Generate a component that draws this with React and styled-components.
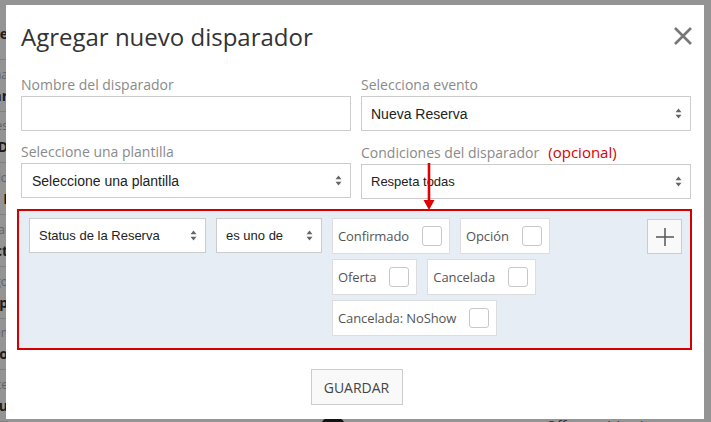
import React from 'react';
import styled, { createGlobalStyle } from 'styled-components';

const GlobalStyle = createGlobalStyle`
  html, body { margin: 0; padding: 0; }
  body { font-family: "Open Sans", "Liberation Sans", sans-serif; overflow: hidden; }
`;

const Screen = styled.div`
  position: relative;
  width: 711px;
  height: 422px;
  overflow: hidden;
  background: #fff;
  display: flex;
`;

const BackList = styled.div`
  display: flex;
  flex-direction: column;
  flex: 0 0 120px;
  margin-left: -112px;
  padding-top: 8px;
`;

const BackItem = styled.div`
  height: 55px;
  border-bottom: 1px solid #ddd;
  display: flex;
  flex-direction: column;
  align-items: flex-end;
  justify-content: center;
  gap: 3px;
`;

const BackLabel = styled.span`
  font-size: 12px;
  color: #aaa;
`;

const BackValue = styled.span`
  font-size: 14px;
  font-weight: 700;
  color: #333;
`;

const BackMain = styled.div`
  flex: 1;
  display: flex;
  flex-direction: column;
  justify-content: flex-end;
`;

const BackFooter = styled.div`
  display: flex;
  align-items: flex-start;
  gap: 200px;
  padding-left: 312px;
  margin-bottom: -18px;
  height: 24px;
`;

const Avatar = styled.span`
  width: 26px;
  height: 26px;
  border-radius: 50%;
  background: #222;
`;

const BackNote = styled.span`
  font-size: 14px;
  color: #555;
  margin-top: 0;
`;

const Overlay = styled.div`
  position: absolute;
  inset: 0;
  background: rgba(0, 0, 0, 0.42);
`;

const Modal = styled.div`
  position: absolute;
  left: 6px;
  top: 5px;
  width: 698px;
  box-sizing: border-box;
  padding: 17px 13px 14px 15px;
  background: #fff;
  display: flex;
  flex-direction: column;
`;

const Header = styled.div`
  display: flex;
  align-items: flex-start;
  justify-content: space-between;
`;

const Title = styled.h1`
  margin: 0;
  font-size: 24px;
  line-height: 30px;
  font-weight: 400;
  color: #333;
`;

const Close = styled.button`
  border: 0;
  background: none;
  padding: 0;
  margin: 5px -1px 0 0;
  width: 18px;
  height: 18px;
  cursor: pointer;
  display: flex;
`;

const FieldRow = styled.div`
  display: grid;
  grid-template-columns: 330px 330px;
  column-gap: 10px;
  margin-top: ${p => p.$top}px;
`;

const Field = styled.div`
  position: relative;
  display: flex;
  flex-direction: column;
  gap: 1px;
`;

const Label = styled.label`
  font-size: 14px;
  line-height: 20px;
  color: #8a8a8a;
`;

const Optional = styled.span`
  color: #d90000;
  font-size: 15px;
  margin-left: 9px;
`;

const Input = styled.input`
  box-sizing: border-box;
  height: 35px;
  border: 1px solid #ccc;
  border-radius: 0;
  outline: none;
  padding: 0 9px;
  font-size: 14px;
`;

const Select = styled.div`
  box-sizing: border-box;
  height: 35px;
  width: ${p => (p.$w ? `${p.$w}px` : 'auto')};
  border: 1px solid #ccc;
  background: #fff;
  display: flex;
  align-items: center;
  justify-content: space-between;
  padding: 0 8px 0 ${p => p.$pl || 9}px;
  font-family: "Liberation Sans", Arial, sans-serif;
  font-size: ${p => p.$fs || 14}px;
  color: #222;
  flex-shrink: 0;
`;

const Arrow = styled.svg`
  position: absolute;
  left: 62px;
  top: 21px;
  overflow: visible;
`;

const Conditions = styled.div`
  margin: 10px -1px 0 -4px;
  border: 2px solid #d40000;
  background: #e7edf4;
  padding: 7px 8px 12px 10px;
  display: flex;
  align-items: flex-start;
  gap: 10px;
`;

const Chips = styled.div`
  flex: 0 0 300px;
  display: flex;
  flex-wrap: wrap;
  gap: 5px 10px;
`;

const Chip = styled.div`
  box-sizing: border-box;
  height: 36px;
  display: flex;
  align-items: center;
  padding: 0 7px 0 5px;
  background: #fff;
  border: 1px solid #ddd;
  font-size: 13px;
  letter-spacing: -0.1px;
  color: #555;
`;

const Box = styled.span`
  width: 20px;
  height: 20px;
  box-sizing: border-box;
  border: 1px solid #c8c8c8;
  border-radius: 3px;
  background: #fff;
  margin-left: 13px;
`;

const PlusButton = styled.button`
  margin-left: auto;
  margin-top: 1px;
  width: 35px;
  height: 35px;
  box-sizing: border-box;
  border: 1px solid #ccc;
  background: #f9f9f9;
  display: flex;
  align-items: center;
  justify-content: center;
  padding: 0;
`;

const Footer = styled.div`
  display: flex;
  justify-content: center;
  margin-top: 19px;
`;

const SaveButton = styled.button`
  width: 92px;
  height: 36px;
  border: 1px solid #ccc;
  background: #f9f9f9;
  font-family: "Open Sans", sans-serif;
  font-size: 14px;
  color: #444;
  padding: 0;
  margin-left: 1px;
`;

function Caret() {
  return (
    <svg width="7" height="11" viewBox="0 0 7 11">
      <path d="M3.5 0.5 L6.5 4.2 H0.5 Z M3.5 10.5 L6.5 6.8 H0.5 Z" fill="#666" />
    </svg>
  );
}

function Dropdown({ children, ...rest }) {
  return (
    <Select {...rest}>
      <span>{children}</span>
      <Caret />
    </Select>
  );
}

const backItems = [
  ['Fecha', 'Mar'],
  ['Noches', 'HD'],
  ['Estado', 'Confirmado I'],
  ['Canal', 'Booking Direct'],
  ['Pago', 'Transf tp'],
  ['Origen', 'Recepción o'],
  ['Agente', 'Maru'],
];

const statuses = ['Confirmado', 'Opción', 'Oferta', 'Cancelada', 'Cancelada: NoShow'];

export default function App() {
  return (
    <Screen>
      <GlobalStyle />
      <BackList>
        <BackItem><BackValue>Tie</BackValue></BackItem>
        {backItems.map(([l, v]) => (
          <BackItem key={l}>
            <BackLabel>{l}</BackLabel>
            <BackValue>{v}</BackValue>
          </BackItem>
        ))}
      </BackList>
      <BackMain>
        <BackFooter>
          <Avatar />
          <BackNote>Offer expiring in</BackNote>
        </BackFooter>
      </BackMain>
      <Overlay />
      <Modal>
        <Header>
          <Title>Agregar nuevo disparador</Title>
          <Close aria-label="Cerrar">
            <svg width="18" height="18" viewBox="0 0 18 18">
              <path d="M1 1 L17 17 M17 1 L1 17" stroke="#777" strokeWidth="2.6" />
            </svg>
          </Close>
        </Header>

        <FieldRow $top={23}>
          <Field>
            <Label>Nombre del disparador</Label>
            <Input />
          </Field>
          <Field>
            <Label>Selecciona evento</Label>
            <Dropdown>Nueva Reserva</Dropdown>
          </Field>
        </FieldRow>

        <FieldRow $top={11}>
          <Field>
            <Label>Seleccione una plantilla</Label>
            <Dropdown $pl={10}>Seleccione una plantilla</Dropdown>
          </Field>
          <Field>
            <Label>
              Condiciones del disparador<Optional>(opcional)</Optional>
            </Label>
            <Dropdown $fs={13}>Respeta todas</Dropdown>
            <Arrow width="12" height="47" viewBox="0 0 12 47">
              <line x1="6" y1="0" x2="6" y2="38" stroke="#e00000" strokeWidth="2.6" />
              <path d="M0.5 37 H11.5 L6 47 Z" fill="#e00000" />
            </Arrow>
          </Field>
        </FieldRow>

        <Conditions>
          <Dropdown $w={177} $fs={13}>Status de la Reserva</Dropdown>
          <Dropdown $w={106} $fs={13}>es uno de</Dropdown>
          <Chips>
            {statuses.map(s => (
              <Chip key={s}>
                {s}
                <Box />
              </Chip>
            ))}
          </Chips>
          <PlusButton aria-label="Agregar condición">
            <svg width="20" height="20" viewBox="0 0 20 20">
              <path d="M10 1 V19 M1 10 H19" stroke="#555" strokeWidth="1.5" />
            </svg>
          </PlusButton>
        </Conditions>

        <Footer>
          <SaveButton>GUARDAR</SaveButton>
        </Footer>
      </Modal>
    </Screen>
  );
}
